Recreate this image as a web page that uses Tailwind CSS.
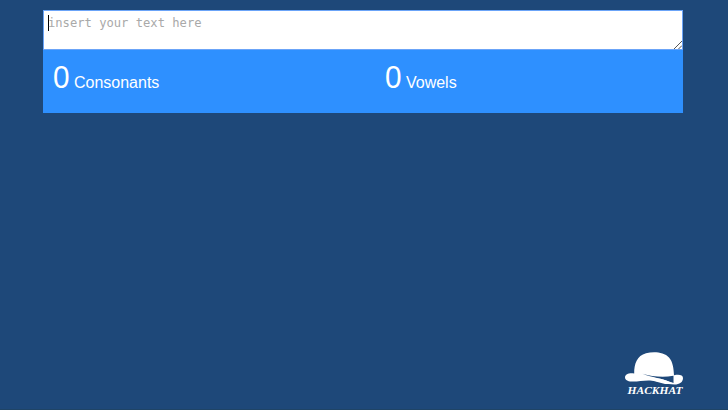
<!DOCTYPE html>
<html lang="en">
<head>
<meta charset="utf-8">
<title>Consonants and Vowels</title>
<script src="https://cdn.jsdelivr.net/npm/@tailwindcss/browser@4"></script>
</head>
<body class="bg-[#1e4879] font-['Liberation_Sans',Arial,sans-serif]">
<div class="flex h-[410px] flex-col overflow-hidden border-b border-[#1f4466] pt-2.5 pl-[43px]">
  <main class="w-[640px]">
    <div class="relative flex h-10 border border-[#6ba4f8] bg-white pt-1 pl-1">
      <span class="h-4 w-px bg-black"></span>
      <span class="-ml-px font-['DejaVu_Sans_Mono',monospace] text-[12.15px] leading-4 whitespace-pre text-[#a9a9a9]">insert your text here</span>
      <svg class="absolute right-0 bottom-0 h-2 w-2" viewBox="0 0 8 8" fill="none" stroke="#555" stroke-width="1"><path d="M0 8 8 0M4.500 8 8 4.500"/></svg>
    </div>
    <div class="grid h-[63px] grid-cols-[332px_1fr] bg-[#2e90ff] pt-2.5 pl-[9px] text-base text-white">
      <p class="pl-px leading-[35px]"><span class="inline-block w-[16.5px] origin-left scale-x-93 text-[32px]">0</span> Consonants</p>
      <p class="pl-px leading-[35px]"><span class="inline-block w-[16.5px] origin-left scale-x-93 text-[32px]">0</span> Vowels</p>
    </div>
  </main>
  <footer class="mt-auto mb-[11px] ml-[582px] w-[60px]">
    <svg class="block h-[47px] w-[60px]" viewBox="0 0 60 47">
      <path fill="#fff" d="M9.200 22.500C9 13 12 4.500 21 2.200 29 .3 39 1 44 6.500c3.800 4.200 4.700 11 5 17.700 4.500-.8 9-.7 9 2.800 0 4.200-3.500 6.500-8.500 6.500-8 0-15-3.200-23-3.900C19 29 13 30.800 6.500 30.500 2.500 30.200 0 28.900 0 26.200c.3-3.500 5-4.700 9.200-3.700Z"/>
      <path fill="#1e4879" d="M17.500 22.700c9 2.600 20 4 31 2v7.200c-3-.3-5-1.400-8-2.600-6-2.300-14-3-23-6.600Z"/>
      <path fill="#fff" d="M25 26.300c8 .7 14 2.300 23 5.600v1H40l-15-4Z"/>
      <text x="2.500" y="43" textLength="55" lengthAdjust="spacingAndGlyphs" fill="#fff" font-family="Liberation Serif, serif" font-size="11" font-weight="700" font-style="italic">HACKHAT</text>
    </svg>
  </footer>
</div>
</body>
</html>
